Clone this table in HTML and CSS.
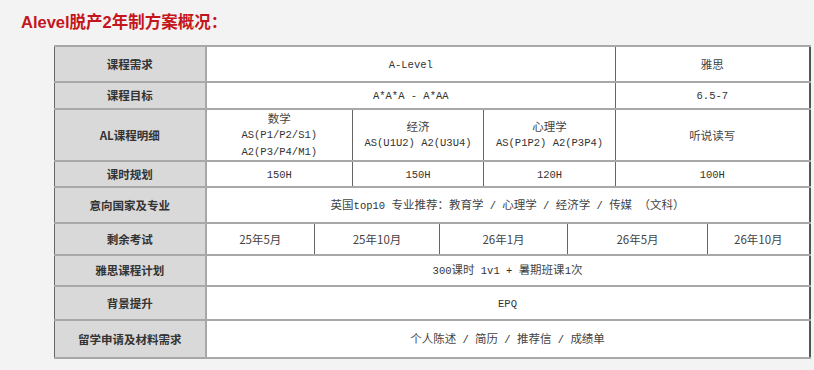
FILE: index.html
```html
<!DOCTYPE html>
<html>
<head>
	<title>Alevel脱产2年制方案概况</title>
	<meta charset="utf-8">
	<link rel="stylesheet" href="styles.css">
</head>
<body>
	<h1 class="title">Alevel脱产2年制方案概况：</h1>
	<table class="plan">
		<colgroup>
			<col class="c0"><col class="c1"><col class="c2"><col class="c3"><col class="c4">
			<col class="c5"><col class="c6"><col class="c7"><col class="c8">
		</colgroup>
		<tr class="r1">
			<th>课程需求</th>
			<td colspan="6"><span class="en">A-Level</span></td>
			<td colspan="2">雅思</td>
		</tr>
		<tr class="r2">
			<th>课程目标</th>
			<td colspan="6"><span class="en">A*A*A - A*AA</span></td>
			<td colspan="2"><span class="en">6.5-7</span></td>
		</tr>
		<tr class="r3">
			<th>AL课程明细</th>
			<td colspan="2">数学<br><span class="en">AS(P1/P2/S1)</span><br><span class="en">A2(P3/P4/M1)</span></td>
			<td colspan="2">经济<br><span class="en">AS(U1U2) A2(U3U4)</span></td>
			<td colspan="2">心理学<br><span class="en">AS(P1P2) A2(P3P4)</span></td>
			<td colspan="2">听说读写</td>
		</tr>
		<tr class="r4">
			<th>课时规划</th>
			<td colspan="2"><span class="en">150H</span></td>
			<td colspan="2"><span class="en">150H</span></td>
			<td colspan="2"><span class="en">120H</span></td>
			<td colspan="2"><span class="en">100H</span></td>
		</tr>
		<tr class="r5">
			<th>意向国家及专业</th>
			<td colspan="8">英国<span class="en">top10 </span>专业推荐：教育学<span class="en"> / </span>心理学<span class="en"> / </span>经济学<span class="en"> / </span>传媒<span class="en"> </span>（文科）</td>
		</tr>
		<tr class="r6">
			<th>剩余考试</th>
			<td>25年5月</td>
			<td colspan="2">25年10月</td>
			<td colspan="2">26年1月</td>
			<td colspan="2">26年5月</td>
			<td>26年10月</td>
		</tr>
		<tr class="r7">
			<th>雅思课程计划</th>
			<td colspan="8"><span class="en">300</span>课时<span class="en"> 1v1 + </span>暑期班课<span class="en">1</span>次</td>
		</tr>
		<tr class="r8">
			<th>背景提升</th>
			<td colspan="8"><span class="en">EPQ</span></td>
		</tr>
		<tr class="r9">
			<th>留学申请及材料需求</th>
			<td colspan="8">个人陈述<span class="en"> / </span>简历<span class="en"> / </span>推荐信<span class="en"> / </span>成绩单</td>
		</tr>
	</table>
</body>
</html>
```

FILE: styles.css
```css
body {
	margin: 0;
	background: #f3f3f3;
	width: 814px;
	height: 370px;
	overflow: hidden;
}
.title {
	margin: 0;
	padding: 12px 0 0 21px;
	height: 22px;
	font-family: "Liberation Sans", "Noto Sans CJK SC", sans-serif;
	font-size: 16.5px;
	line-height: 20px;
	font-weight: bold;
	color: #c4161c;
}
.plan {
	margin: 11px 0 0 54px;
	width: 756px;
	table-layout: fixed;
	border-collapse: collapse;
	background: #fff;
	font-family: "Noto Sans CJK SC", "Liberation Serif", sans-serif;
	font-size: 11.5px;
	line-height: 15px;
	color: #444;
	border-top: 2px solid #9a9a9a;
	border-left: 1px solid #9a9a9a;
	border-right: 2px solid #555;
	border-bottom: 2px solid #9a9a9a;
}
.en {
	font-family: "Liberation Mono", monospace;
	font-size: 10.5px;
	color: #333;
}
.c0 { width: 151px; }
.c1 { width: 109px; }
.c2 { width: 38px; }
.c3 { width: 87px; }
.c4 { width: 44px; }
.c5 { width: 84px; }
.c6 { width: 48px; }
.c7 { width: 92px; }
.c8 { width: 102px; }
.plan th,
.plan td {
	padding: 0;
	text-align: center;
	vertical-align: middle;
	font-weight: normal;
	border-top: 2px solid #a8a8a8;
	border-bottom: 2px solid #a8a8a8;
	border-left: 1px solid #666;
	border-right: 1px solid #666;
}
.plan th {
	background: #d9d9d9;
	color: #333;
	font-weight: bold;
	font-family: "Noto Sans CJK SC", "Liberation Serif", serif;
	border-right: 2px solid #a8a8a8;
}
.r1 { height: 36px; }
.r2 { height: 27px; }
.r3 { height: 52px; }
.r4 { height: 26px; }
.r5 { height: 36px; }
.r6 { height: 32px; }
.r7 { height: 31px; }
.r8 { height: 34px; }
.r9 { height: 38px; }
```
